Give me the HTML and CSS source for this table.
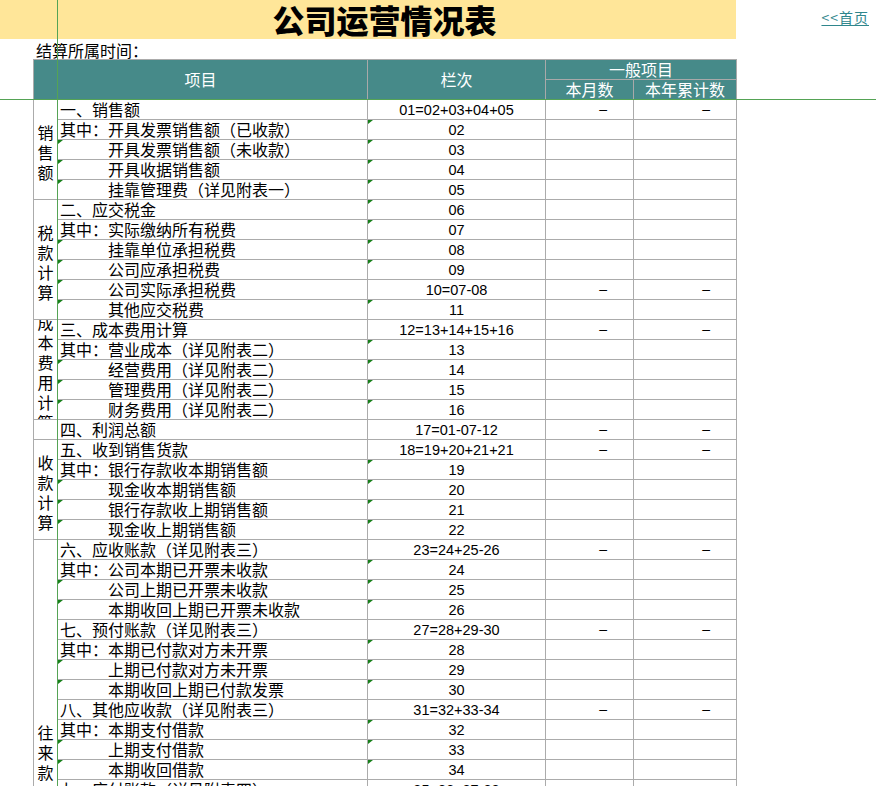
FILE: index.html
```html
<!DOCTYPE html>
<html lang="zh-CN">
<head>
<meta charset="utf-8">
<title>公司运营情况表</title>
<link rel="stylesheet" href="styles.css">
</head>
<body>
<div class="top">
  <div class="title">公司运营情况表</div>
  <div class="nav"><a href="#">&lt;&lt;首页</a></div>
</div>
<div class="period">结算所属时间：</div>
<div class="sheet">
  <div class="h h-item">项目</div>
  <div class="h h-no">栏次</div>
  <div class="h h-gen">一般项目</div>
  <div class="h">本月数</div>
  <div class="h">本年累计数</div>

  <div class="cat s5"><span>销售额</span></div>
  <div class="it">一、销售额</div><div class="no">01=02+03+04+05</div><div class="m">–</div><div class="y">–</div>
  <div class="it">其中：开具发票销售额（已收款）</div><div class="no tri">02</div><div class="m"></div><div class="y"></div>
  <div class="it ind tri">开具发票销售额（未收款）</div><div class="no tri">03</div><div class="m"></div><div class="y"></div>
  <div class="it ind tri">开具收据销售额</div><div class="no tri">04</div><div class="m"></div><div class="y"></div>
  <div class="it ind tri">挂靠管理费（详见附表一）</div><div class="no tri">05</div><div class="m"></div><div class="y"></div>

  <div class="cat s6"><span>税款计算</span></div>
  <div class="it">二、应交税金</div><div class="no tri">06</div><div class="m"></div><div class="y"></div>
  <div class="it">其中：实际缴纳所有税费</div><div class="no tri">07</div><div class="m"></div><div class="y"></div>
  <div class="it ind tri">挂靠单位承担税费</div><div class="no tri">08</div><div class="m"></div><div class="y"></div>
  <div class="it ind tri">公司应承担税费</div><div class="no tri">09</div><div class="m"></div><div class="y"></div>
  <div class="it ind tri">公司实际承担税费</div><div class="no">10=07-08</div><div class="m">–</div><div class="y">–</div>
  <div class="it ind tri">其他应交税费</div><div class="no tri">11</div><div class="m"></div><div class="y"></div>

  <div class="cat s5"><span>成本费用计算</span></div>
  <div class="it">三、成本费用计算</div><div class="no">12=13+14+15+16</div><div class="m">–</div><div class="y">–</div>
  <div class="it">其中：营业成本（详见附表二）</div><div class="no tri">13</div><div class="m"></div><div class="y"></div>
  <div class="it ind tri">经营费用（详见附表二）</div><div class="no tri">14</div><div class="m"></div><div class="y"></div>
  <div class="it ind tri">管理费用（详见附表二）</div><div class="no tri">15</div><div class="m"></div><div class="y"></div>
  <div class="it ind tri">财务费用（详见附表二）</div><div class="no tri">16</div><div class="m"></div><div class="y"></div>

  <div class="cat"></div>
  <div class="it">四、利润总额</div><div class="no">17=01-07-12</div><div class="m">–</div><div class="y">–</div>

  <div class="cat s5"><span>收款计算</span></div>
  <div class="it">五、收到销售货款</div><div class="no">18=19+20+21+21</div><div class="m">–</div><div class="y">–</div>
  <div class="it">其中：银行存款收本期销售额</div><div class="no tri">19</div><div class="m"></div><div class="y"></div>
  <div class="it ind tri">现金收本期销售额</div><div class="no tri">20</div><div class="m"></div><div class="y"></div>
  <div class="it ind tri">银行存款收上期销售额</div><div class="no tri">21</div><div class="m"></div><div class="y"></div>
  <div class="it ind tri">现金收上期销售额</div><div class="no tri">22</div><div class="m"></div><div class="y"></div>

  <div class="cat s22"><span>往来款项</span></div>
  <div class="it">六、应收账款（详见附表三）</div><div class="no">23=24+25-26</div><div class="m">–</div><div class="y">–</div>
  <div class="it">其中：公司本期已开票未收款</div><div class="no tri">24</div><div class="m"></div><div class="y"></div>
  <div class="it ind tri">公司上期已开票未收款</div><div class="no tri">25</div><div class="m"></div><div class="y"></div>
  <div class="it ind tri">本期收回上期已开票未收款</div><div class="no tri">26</div><div class="m"></div><div class="y"></div>
  <div class="it">七、预付账款（详见附表三）</div><div class="no">27=28+29-30</div><div class="m">–</div><div class="y">–</div>
  <div class="it">其中：本期已付款对方未开票</div><div class="no tri">28</div><div class="m"></div><div class="y"></div>
  <div class="it ind tri">上期已付款对方未开票</div><div class="no tri">29</div><div class="m"></div><div class="y"></div>
  <div class="it ind tri">本期收回上期已付款发票</div><div class="no tri">30</div><div class="m"></div><div class="y"></div>
  <div class="it">八、其他应收款（详见附表三）</div><div class="no">31=32+33-34</div><div class="m">–</div><div class="y">–</div>
  <div class="it">其中：本期支付借款</div><div class="no tri">32</div><div class="m"></div><div class="y"></div>
  <div class="it ind tri">上期支付借款</div><div class="no tri">33</div><div class="m"></div><div class="y"></div>
  <div class="it ind tri">本期收回借款</div><div class="no tri">34</div><div class="m"></div><div class="y"></div>
  <div class="it">九、应付账款（详见附表四）</div><div class="no">35=36+37-38</div><div class="m">–</div><div class="y">–</div>
  <div class="it">其中：本期收到发票未付款</div><div class="no tri">36</div><div class="m"></div><div class="y"></div>
  <div class="it ind tri">上期收到发票未付款</div><div class="no tri">37</div><div class="m"></div><div class="y"></div>
  <div class="it ind tri">本期支付上期未付款</div><div class="no tri">38</div><div class="m"></div><div class="y"></div>
</div>
<div class="fz-v"></div>
<div class="fz-h"></div>
</body>
</html>
```

FILE: styles.css
```css
* { box-sizing: border-box; }
html, body { margin: 0; padding: 0; }
body {
  width: 876px;
  height: 786px;
  overflow: hidden;
  position: relative;
  background: #fff;
  color: #000;
  font-family: "Noto Sans CJK SC", sans-serif;
}
.top { display: flex; height: 39px; }
.title {
  width: 736px;
  height: 39px;
  background: #FFE699;
  padding-left: 33px;
  text-align: center;
  font-size: 32px;
  font-weight: 900;
  line-height: 39px;
}
.nav {
  flex: 1;
  display: flex;
  justify-content: flex-end;
  align-items: flex-start;
  padding: 8px 7px 0 0;
}
.nav a {
  font-size: 14px;
  line-height: 18px;
  letter-spacing: 1px;
  color: #2F868C;
  text-decoration: underline;
  text-underline-offset: 2px;
}
.period {
  height: 20px;
  padding: 1px 0 0 36px;
  font-size: 16px;
  line-height: 20px;
}
.sheet {
  display: grid;
  grid-template-columns: 24px 310px 178px 88px 103px;
  grid-auto-rows: 20px;
  width: 704px;
  margin-left: 33px;
  border-left: 1px solid #ABABAB;
  border-top: 1px solid #ABABAB;
}
.sheet > div {
  position: relative;
  border-right: 1px solid #ABABAB;
  border-bottom: 1px solid #ABABAB;
  font-size: 16px;
  line-height: 19px;
  white-space: nowrap;
  overflow: hidden;
}
.sheet > .h {
  background: #468A89;
  color: #fff;
  display: flex;
  align-items: center;
  justify-content: center;
  border-color: #A9A9A9;
}
.h-item { grid-column: span 2; grid-row: span 2; }
.h-no { grid-row: span 2; }
.h-gen { grid-column: span 2; }
.sheet > .cat {
  display: flex;
  flex-direction: column;
  justify-content: center;
  align-items: center;
  padding-top: 4px;
  white-space: normal;
}
.cat span {
  display: block;
  width: 16px;
  line-height: 20px;
  text-align: center;
  word-break: break-all;
}
.s5 { grid-row: span 5; }
.s6 { grid-row: span 6; }
.s22 { grid-row: span 22; }
.sheet > .it { padding-left: 2px; }
.sheet > .it.ind { padding-left: 50px; }
.sheet > .no {
  text-align: center;
  font-family: "Liberation Sans", Arial, sans-serif;
  font-size: 14.5px;
  line-height: 20px;
}
.sheet > .m, .sheet > .y {
  text-align: right;
  padding-right: 26px;
  font-family: "Liberation Sans", Arial, sans-serif;
  font-size: 14px;
  line-height: 19px;
}
.tri::before {
  content: "";
  position: absolute;
  top: 0;
  left: 0;
  width: 0;
  height: 0;
  border-top: 4px solid #17801A;
  border-right: 5px solid transparent;
}
.fz-v {
  position: absolute;
  left: 57px;
  top: 0;
  width: 1px;
  height: 786px;
  background: #55A355;
}
.fz-h {
  position: absolute;
  left: 0;
  top: 99px;
  width: 876px;
  height: 1px;
  background: #55A355;
}
```
